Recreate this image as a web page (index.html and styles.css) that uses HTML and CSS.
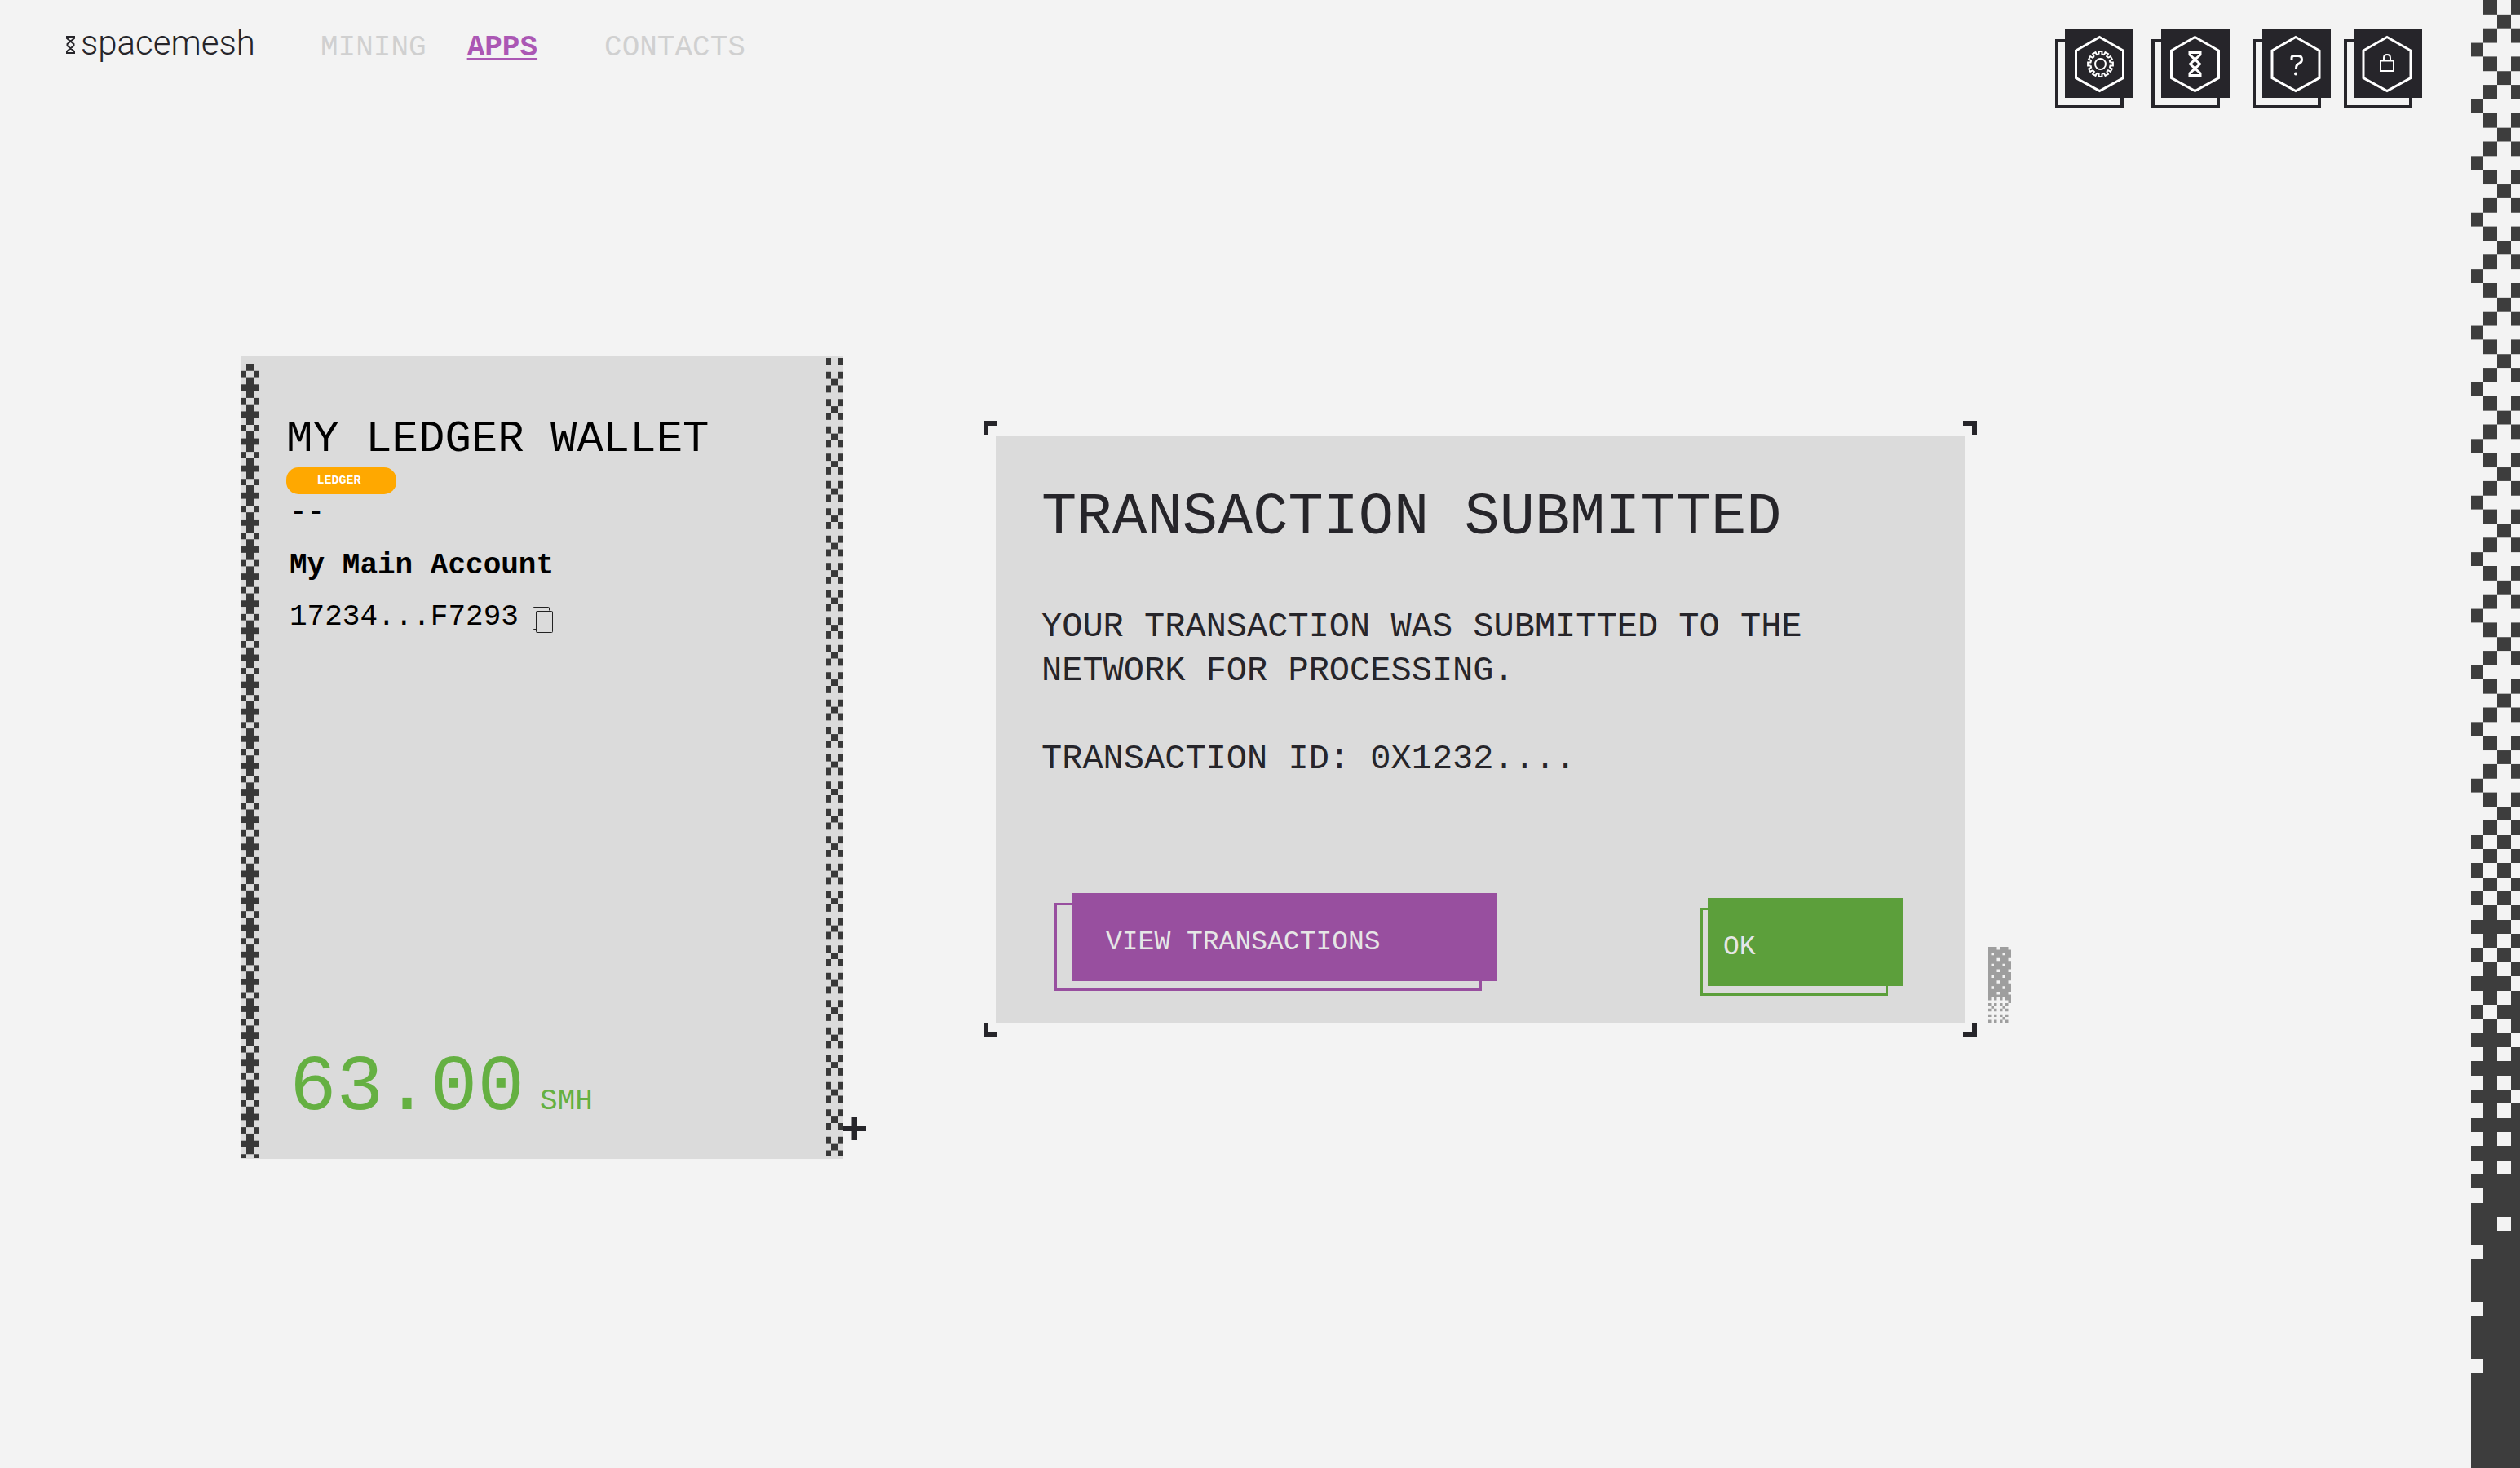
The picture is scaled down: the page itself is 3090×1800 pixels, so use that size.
FILE: index.html
```html
<!DOCTYPE html>
<html lang="en">
<head>
<meta charset="utf-8">
<meta name="viewport" content="width=device-width, initial-scale=1">
<title>Spacemesh</title>
<link rel="stylesheet" href="styles.css">
</head>
<body>
<div class="page">
  <header class="header">
    <a class="logo" href="#">
      <svg class="logo-mark" viewBox="0 0 11 22" aria-hidden="true"><path d="M1 1H10V3L1.500 10V12L10 19V21H1V19L9.500 12V10L1 3Z"/></svg>
      <span>spacemesh</span>
    </a>
    <nav class="nav">
      <a class="nav-link" href="#">MINING</a>
      <a class="nav-link nav-link-active" href="#">APPS</a>
      <a class="nav-link nav-link-last" href="#">CONTACTS</a>
    </nav>
    <div class="tools">
      <button class="tool" type="button" aria-label="Settings">
        <svg viewBox="0 0 84 84" aria-hidden="true">
          <defs><path id="tooth" d="M-1.900-12L-2-15.400H2L1.900-12L4.400-11.300"/></defs>
          <path class="hex" d="M42.500 9.500 71.500 26V59.500L42.500 75.500 13.500 59.500V26Z"/>
          <g class="thin" transform="translate(43.500 42.500)">
            <circle r="6.500"/>
            <use href="#tooth"/><use href="#tooth" transform="rotate(30)"/><use href="#tooth" transform="rotate(60)"/><use href="#tooth" transform="rotate(90)"/><use href="#tooth" transform="rotate(120)"/><use href="#tooth" transform="rotate(150)"/><use href="#tooth" transform="rotate(180)"/><use href="#tooth" transform="rotate(210)"/><use href="#tooth" transform="rotate(240)"/><use href="#tooth" transform="rotate(270)"/><use href="#tooth" transform="rotate(300)"/><use href="#tooth" transform="rotate(330)"/>
          </g>
        </svg>
      </button>
      <button class="tool" type="button" aria-label="Network">
        <svg viewBox="0 0 84 84" aria-hidden="true"><path class="hex" d="M41.500 9.500 70.500 26V59.500L41.500 75.500 12.500 59.500V26Z"/><path d="M35 28.500H48V31L35.500 42.500 48 54V56.500H35V54L47.500 42.500 35 31Z"/></svg>
      </button>
      <button class="tool tool-help" type="button" aria-label="Help">
        <svg viewBox="0 0 84 84" aria-hidden="true"><path class="hex" d="M41 9.500 70 26V59.500L41 75.500 12 59.500V26Z"/><path d="M36 37V35Q36 32.500 39 32.500H44Q48.500 32.500 48.500 37 48.500 40.500 45 42 41.500 43 41.500 48"/><circle class="dot" cx="41" cy="54.500" r="2"/></svg>
      </button>
      <button class="tool tool-lock" type="button" aria-label="Lock">
        <svg viewBox="0 0 84 84" aria-hidden="true"><path class="hex" d="M41 9.500 70 26V59.500L41 75.500 12 59.500V26Z"/><path class="thin" d="M33 38.500H49V51H33ZM37 38V35Q37 31 41 31T45 35V38"/></svg>
      </button>
    </div>
  </header>

  <main class="main">
    <section class="wallet">
      <svg class="wallet-edge wallet-edge-left" aria-hidden="true">
        <defs><pattern id="weave" width="21" height="33.120" patternUnits="userSpaceOnUse"><path d="M6 0H15V33.120H6ZM0 8.280H6V16.560H0ZM15 8.280H21V16.560H15ZM0 24.840H21V33.120H0Z"/><path class="gap" d="M6 8.280H15V16.560H6Z"/></pattern></defs>
        <rect width="21" height="100%" fill="url(#weave)"/>
      </svg>
      <div class="wallet-body">
        <h2 class="wallet-title">MY LEDGER WALLET</h2>
        <span class="badge">LEDGER</span>
        <div class="divider">--</div>
        <h3 class="account-name">My Main Account</h3>
        <div class="address">
          <span>17234...F7293</span>
          <button class="copy" type="button" aria-label="Copy address">
            <svg viewBox="0 0 26 32" aria-hidden="true"><path d="M4.500 27.500H1.500Q.500 27.500 .500 26.500V1.500Q.500 .500 1.500 .500H19.500Q20.500 .500 20.500 1.500V4.500"/><rect x="4.500" y="5.500" width="20" height="26" rx="1"/></svg>
          </button>
        </div>
        <div class="balance"><span class="amount">63.00</span><span class="unit">SMH</span></div>
      </div>
      <svg class="wallet-edge wallet-edge-right" aria-hidden="true">
        <defs><pattern id="cross" width="21" height="33.500" patternUnits="userSpaceOnUse"><path d="M0 0H6V8.375H0ZM15 0H21V8.375H15ZM0 16.750H6V25.125H0ZM15 16.750H21V25.125H15ZM6 25.125H15V33.500H6Z"/></pattern></defs>
        <rect width="21" height="100%" fill="url(#cross)"/>
      </svg>
      <svg class="plus" viewBox="0 0 28 28" aria-hidden="true"><path d="M10.500 0H17V11H28V17H17V28H10.500V17H0V11H10.500Z"/></svg>
    </section>

    <section class="frame">
      <svg class="corner corner-tl" viewBox="0 0 17 17" aria-hidden="true"><path d="M0 0H17V6H6V17H0Z"/></svg>
      <svg class="corner corner-tr" viewBox="0 0 17 17" aria-hidden="true"><path d="M0 0H17V17H11V6H0Z"/></svg>
      <svg class="corner corner-bl" viewBox="0 0 17 17" aria-hidden="true"><path d="M0 0H6V11H17V17H0Z"/></svg>
      <svg class="corner corner-br" viewBox="0 0 17 17" aria-hidden="true"><path d="M11 0H17V17H0V11H11Z"/></svg>
      <div class="notice">
        <h1 class="notice-title">TRANSACTION SUBMITTED</h1>
        <p class="notice-text">YOUR TRANSACTION WAS SUBMITTED TO THE NETWORK FOR PROCESSING.</p>
        <p class="notice-text notice-id">TRANSACTION ID: 0X1232....</p>
        <div class="actions">
          <button class="action action-view" type="button">VIEW TRANSACTIONS</button>
          <button class="action action-ok" type="button">OK</button>
        </div>
      </div>
      <svg class="grain" viewBox="0 0 8 27" preserveAspectRatio="none" aria-hidden="true"><path d="M0 0H3V1H4V0H7V1H8V4H7V5H8V8H7V9H8V12H7V13H8V16H7V17H8V20H7V19H6V18H5V19H4V18H3V19H2V18H1V19H0Z"/><path class="hole" d="M1 2h1v1h-1zM5 2h1v1h-1zM3 4h1v1h-1zM1 6h1v1h-1zM5 6h1v1h-1zM3 8h1v1h-1zM1 10h1v1h-1zM5 10h1v1h-1zM3 12h1v1h-1zM1 14h1v1h-1zM5 14h1v1h-1zM3 16h1v1h-1z"/><path d="M0 20h1v1h-1zM2 20h1v1h-1zM4 20h1v1h-1zM6 20h1v1h-1zM1 21h1v1h-1zM5 21h1v1h-1zM0 22h1v1h-1zM2 22h1v1h-1zM4 22h1v1h-1zM6 22h1v1h-1zM0 24h1v1h-1zM2 24h1v1h-1zM4 24h1v1h-1zM6 24h1v1h-1zM5 25h1v1h-1zM0 26h1v1h-1zM2 26h1v1h-1zM4 26h1v1h-1zM6 26h1v1h-1z"/></svg>
    </section>
  </main>
</div>

<aside class="rail" aria-hidden="true">
  <svg viewBox="0 0 60 1800" preserveAspectRatio="xMinYMin slice">
    <g transform="scale(1 17.350)">
      <defs><pattern id="rail-check" width="60" height="4" patternUnits="userSpaceOnUse"><path d="M14.500 0H31.500V1H14.500ZM48.500 0H60V1H48.500ZM31.500 1H48.500V2H31.500ZM14.500 2H31.500V3H14.500ZM48.500 2H60V3H48.500ZM0 3H14.500V4H0Z"/></pattern></defs>
      <rect width="60" height="58" fill="url(#rail-check)"/>
      <rect y="58" width="60" height="60"/>
      <path class="hole" d="M0 58h14.500v1h-14.500zM0 60h14.500v1h-14.500zM0 62h14.500v1h-14.500zM0 64h14.500v1h-14.500zM0 66h14.500v1h-14.500zM0 68h14.500v1h-14.500zM0 70h14.500v1h-14.500zM0 72h14.500v1h-14.500zM0 74h14.500v1h-14.500zM0 76h14.500v1h-14.500zM0 78h14.500v1h-14.500zM0 80h14.500v1h-14.500zM0 82h14.500v1h-14.500zM0 84h14.500v1h-14.500zM0 88h14.500v1h-14.500zM0 92h14.500v1h-14.500zM0 96h14.500v1h-14.500z"/>
      <path class="hole" d="M14.500 59h17v1h-17zM14.500 61h17v1h-17zM14.500 63h17v1h-17zM14.500 67h17v1h-17zM14.500 71h17v1h-17z"/>
      <path class="hole" d="M31.500 58h17v1h-17zM31.500 60h17v1h-17zM31.500 62h17v1h-17zM31.500 64h17v1h-17zM31.500 66h17v1h-17zM31.500 68h17v1h-17zM31.500 70h17v1h-17zM31.500 72h17v1h-17zM31.500 74h17v1h-17zM31.500 76h17v1h-17zM31.500 78h17v1h-17zM31.500 80h17v1h-17zM31.500 82h17v1h-17zM31.500 86h17v1h-17z"/>
      <path class="hole" d="M48.500 59h12v1h-12zM48.500 61h12v1h-12zM48.500 63h12v1h-12zM48.500 65h12v1h-12zM48.500 67h12v1h-12zM48.500 69h12v1h-12zM48.500 73h12v1h-12zM48.500 77h12v1h-12z"/>
    </g>
  </svg>
</aside>
</body>
</html>
```
FILE: styles.css
```css
:root {
  --bg: #f3f3f3;
  --panel: #dbdbdb;
  --ink: #26252a;
  --purple: #984f9f;
  --green: #5c9f3b;
}

* {
  box-sizing: border-box;
}

body {
  margin: 0;
  min-height: 100vh;
  display: flex;
  background: var(--bg);
  color: #000;
  font-family: "Liberation Mono", monospace;
  overflow-x: hidden;
}

h1, h2, h3, p {
  margin: 0;
  font-weight: 400;
}

button {
  margin: 0;
  padding: 0;
  border: 0;
  background: none;
  font: inherit;
  cursor: pointer;
}

svg {
  display: block;
}

.page {
  flex: 1;
  min-width: 0;
}

/* Header */

.header {
  display: flex;
  align-items: flex-start;
  padding: 28px 60px 0 81px;
}

.logo {
  display: flex;
  align-items: center;
  gap: 7px;
  width: 312px;
  color: var(--ink);
  font: 300 42px/50px Roboto, sans-serif;
  text-decoration: none;
}

.logo-mark {
  width: 11px;
  height: 22px;
  margin-top: 4px;
  fill: none;
  stroke: var(--ink);
  stroke-width: 2;
}

.nav {
  display: flex;
  gap: 50px;
  margin-top: 9px;
}

.nav-link {
  color: #d0d0d0;
  font-size: 36px;
  line-height: 44px;
  text-decoration: none;
}

.nav-link-active {
  color: #ab57b4;
  font-weight: 700;
  text-decoration: underline;
  text-decoration-thickness: 2px;
  text-underline-offset: 3px;
}

.nav-link-last {
  margin-left: 32px;
}

.tools {
  display: flex;
  margin: 8px 0 0 auto;
}

.tool,
.action {
  position: relative;
  isolation: isolate;
}

.tool::before,
.action::before,
.tool::after,
.action::after {
  content: "";
  position: absolute;
  z-index: -1;
}

.tool::after,
.action::after {
  inset: 0;
  background: var(--face);
}

.tool {
  --face: var(--ink);
  width: 84px;
  height: 84px;
  margin-left: 34px;
}

.tool::before {
  inset: 12px 12px -13px -12px;
  border: 4px solid var(--ink);
}

.tool-help {
  margin-left: 40px;
}

.tool-lock {
  margin-left: 28px;
}

.tool svg {
  width: 84px;
  height: 84px;
  fill: none;
  stroke: #fff;
  stroke-width: 3;
}

.tool .thin {
  stroke-width: 2;
}

.tool .dot {
  fill: #fff;
  stroke: none;
}

/* Content */

.main {
  display: flex;
  align-items: flex-start;
  gap: 172px;
  padding: 316px 60px 60px 296px;
}

.wallet {
  position: relative;
  flex: 0 1 738px;
  min-height: 985px;
  display: flex;
  background: var(--panel);
}

.wallet-edge {
  flex: none;
  width: 21px;
  height: auto;
  fill: #383838;
  shape-rendering: crispEdges;
}

.wallet-edge-left {
  margin: 10px 0 1px;
}

.wallet-edge-right {
  margin: 3px 0;
}

.gap {
  fill: var(--panel);
}

.wallet-body {
  flex: 1;
  display: flex;
  flex-direction: column;
  align-items: flex-start;
  padding: 71px 0 26px 34px;
}

.wallet-title {
  font-size: 54px;
  line-height: 64px;
  white-space: nowrap;
}

.badge {
  width: 135px;
  height: 33px;
  margin-top: 2px;
  padding-right: 6px;
  border-radius: 15px;
  background: #ffa800;
  color: #fff;
  font-size: 15px;
  font-weight: 700;
  line-height: 33px;
  text-align: center;
}

.divider,
.account-name,
.address,
.balance {
  padding-left: 4px;
  font-size: 36px;
  line-height: 48px;
}

.divider {
  margin-top: 9px;
  line-height: 28px;
}

.account-name {
  margin-top: 27px;
  font-weight: 700;
}

.address {
  display: flex;
  align-items: center;
  gap: 17px;
  margin-top: 15px;
}

.copy svg {
  width: 26px;
  height: 32px;
  margin-top: 6px;
  fill: var(--panel);
  stroke: #222;
  stroke-width: 1;
}

.balance {
  display: flex;
  align-items: baseline;
  gap: 19px;
  margin-top: auto;
  color: #65b042;
}

.amount {
  font-size: 96px;
  line-height: 120px;
}

.plus {
  position: absolute;
  left: 100%;
  bottom: 23px;
  width: 28px;
  height: 28px;
  fill: var(--ink);
}

.frame {
  position: relative;
  flex: 0 1 1218px;
  margin-top: 80px;
  padding: 18px 14px 17px 15px;
}

.corner {
  position: absolute;
  width: 17px;
  height: 17px;
  fill: var(--ink);
}

.corner-tl { top: 0; left: 0; }
.corner-tr { top: 0; right: 0; }
.corner-bl { bottom: 0; left: 0; }
.corner-br { bottom: 0; right: 0; }

.notice {
  padding: 53px 76px 45px 56px;
  background: var(--panel);
  color: var(--ink);
}

.notice-title {
  font-size: 72px;
  line-height: 96px;
}

.notice-text {
  max-width: 960px;
  margin-top: 59px;
  font-size: 42px;
  line-height: 54px;
}

.notice-id {
  margin-top: 54px;
}

.actions {
  display: flex;
  justify-content: space-between;
  align-items: flex-start;
  margin-top: 137px;
  padding-left: 37px;
}

.action {
  height: 108px;
  padding-top: 14px;
  color: #e6e6e6;
  font-size: 33px;
  line-height: 48px;
  text-align: left;
}

.action-view {
  --face: var(--purple);
  width: 521px;
  padding-left: 42px;
}

.action-view::before {
  inset: 12px 18px -12px -21px;
  border: 3px solid var(--purple);
}

.action-ok {
  --face: var(--green);
  width: 240px;
  margin-top: 6px;
  padding-left: 19px;
}

.action-ok::before {
  inset: 12px 19px -12px -9px;
  border: 3px solid var(--green);
}

.grain {
  position: absolute;
  right: -42px;
  bottom: 17px;
  width: 28px;
  height: 93px;
  fill: #9e9e9e;
}

.hole {
  fill: var(--bg);
}

/* Right edge */

.rail {
  flex: none;
  position: relative;
  width: 60px;
  overflow: hidden;
}

.rail svg {
  position: absolute;
  inset: 0;
  width: 100%;
  height: 100%;
  fill: #3d3d3d;
  shape-rendering: crispEdges;
}
```
